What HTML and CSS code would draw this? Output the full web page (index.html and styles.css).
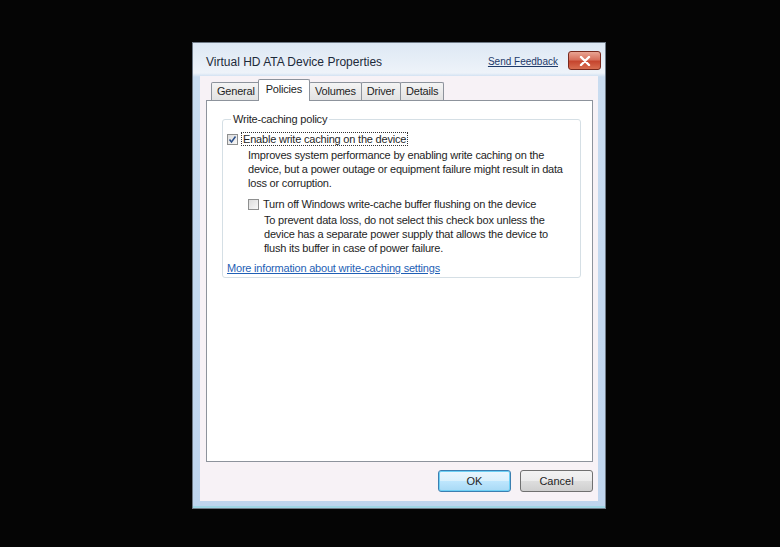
FILE: index.html
```html
<!DOCTYPE html>
<html>
<head>
  <title>Virtual HD ATA Device Properties</title>
  <link rel="stylesheet" href="styles.css">
</head>
<body>
  <div class="window">
    <div class="titlebar">
      <span class="title">Virtual HD ATA Device Properties</span>
      <a class="feedback" href="#">Send Feedback</a>
      <div class="close">
        <svg width="12" height="10" viewBox="0 0 12 10">
          <path d="M2 1 L10 9 M10 1 L2 9" stroke="#fff" stroke-width="2.4" stroke-linecap="round"/>
        </svg>
      </div>
    </div>

    <div class="client">
      <div class="tabs">
        <div class="tab">General</div>
        <div class="tab active">Policies</div>
        <div class="tab">Volumes</div>
        <div class="tab">Driver</div>
        <div class="tab">Details</div>
      </div>

      <div class="panel">
        <fieldset class="group">
          <legend>Write-caching policy</legend>

          <label class="check">
            <span class="box checked">
              <svg width="9" height="9" viewBox="0 0 9 9">
                <path d="M1.5 4.5 L3.5 7 L7.5 1.5" fill="none" stroke="#2b4f8a" stroke-width="1.5"/>
              </svg>
            </span>
            <span class="focus">Enable write caching on the device</span>
          </label>
          <p class="desc">Improves system performance by enabling write caching on the device, but a power outage or equipment failure might result in data loss or corruption.</p>

          <div class="sub">
            <label class="check">
              <span class="box"></span>
              <span>Turn off Windows write-cache buffer flushing on the device</span>
            </label>
            <p class="desc">To prevent data loss, do not select this check box unless the device has a separate power supply that allows the device to flush its buffer in case of power failure.</p>
          </div>

          <a class="more" href="#">More information about write-caching settings</a>
        </fieldset>
      </div>

      <div class="buttons">
        <button class="btn default">OK</button>
        <button class="btn">Cancel</button>
      </div>
    </div>
  </div>
</body>
</html>
```

FILE: styles.css
```css
/* Page */
body {
  margin: 0;
  background: #050505;
  font-family: "Liberation Sans", Arial, sans-serif;
  font-size: 11px;
  letter-spacing: -0.2px;
  color: #1e1e1e;
}

/* Window frame */
.window {
  margin: 42px 0 0 192px;
  border: 1px solid #6f7a86;
  background: linear-gradient(to bottom, #dde8f4 0, #eef3f9 30px, #c9dcf0 34px, #bfd5ee 100%);
  display: flex;
  flex-direction: column;
  padding: 0 7px 7px 7px;
  width: 398px;
  height: 458px;
  box-shadow: inset 0 -2px 0 #9fd6e6;
}

.titlebar {
  height: 33px;
  display: flex;
  align-items: center;
  position: relative;
}

.title {
  font-size: 12px;
  letter-spacing: 0;
  color: #1d2a3a;
  margin-left: 6px;
  margin-top: 4px;
}

.feedback {
  margin-left: auto;
  margin-right: 40px;
  margin-top: 4px;
  color: #1d3a6a;
  font-size: 10px;
  letter-spacing: 0;
}

.close {
  position: absolute;
  right: -3px;
  top: 8px;
  width: 31px;
  height: 17px;
  border: 1px solid #7a2a1e;
  border-radius: 3px;
  background: linear-gradient(to bottom, #e9a493 0, #d7705c 45%, #c6452e 55%, #d86d50 100%);
  display: flex;
  align-items: center;
  justify-content: center;
}

/* Client area */
.client {
  flex: 1;
  background: #f7f2f6;
  display: flex;
  flex-direction: column;
  padding: 3px 5px 0 6px;
}

.tabs {
  display: flex;
  align-items: flex-end;
  height: 21px;
  padding-left: 5px;
  position: relative;
  z-index: 1;
}

.tab {
  height: 17px;
  line-height: 17px;
  padding: 0 5px;
  border: 1px solid #8d939c;
  border-bottom: none;
  margin-right: -1px;
  background: linear-gradient(to bottom, #f4f4f4, #e2e2e2);
  border-radius: 2px 2px 0 0;
}

.tab.active {
  height: 21px;
  line-height: 19px;
  background: #fff;
  padding: 0 7px;
  margin: 0 -1px 0 -2px;
  position: relative;
  top: 1px;
}

.panel {
  height: 362px;
  background: #fff;
  border: 1px solid #8d939c;
  padding: 12px 11px 0 15px;
  box-sizing: border-box;
}

/* Group box */
.group {
  margin: 0;
  border: 1px solid #d5dfe5;
  border-radius: 3px;
  padding: 8px 12px 6px 4px;
  height: 165px;
  box-sizing: border-box;
}

.group legend {
  padding: 0 2px;
  margin-left: 4px;
}

.check {
  display: flex;
  align-items: center;
  gap: 4px;
}

.box {
  width: 11px;
  height: 11px;
  border: 1px solid #8e8f8f;
  background: linear-gradient(135deg, #dcdcdc, #f8f8f8);
  display: flex;
  align-items: center;
  justify-content: center;
  box-sizing: border-box;
}

.focus {
  outline: 1px dotted #333;
  padding: 0 1px;
}

.desc {
  margin: 3px 0 0 21px;
  line-height: 14px;
}

.sub {
  margin: 8px 0 0 21px;
}

.sub .desc {
  margin-left: 16px;
}

.more {
  display: block;
  margin-top: 7px;
  color: #1f5fb5;
}

/* Buttons */
.buttons {
  display: flex;
  justify-content: flex-end;
  gap: 9px;
  margin-top: 8px;
}

.btn {
  width: 73px;
  height: 22px;
  font-family: inherit;
  font-size: 11px;
  color: #1e1e1e;
  border: 1px solid #707070;
  border-radius: 3px;
  background: linear-gradient(to bottom, #f2f2f2 0, #ebebeb 50%, #dddddd 51%, #cfcfcf 100%);
}

.btn.default {
  border-color: #3c7fb1;
  box-shadow: inset 0 0 0 1px #6ed0f5;
  background: linear-gradient(to bottom, #eaf6fd 0, #d9f0fc 50%, #bee6fd 51%, #a7d9f5 100%);
}
```
